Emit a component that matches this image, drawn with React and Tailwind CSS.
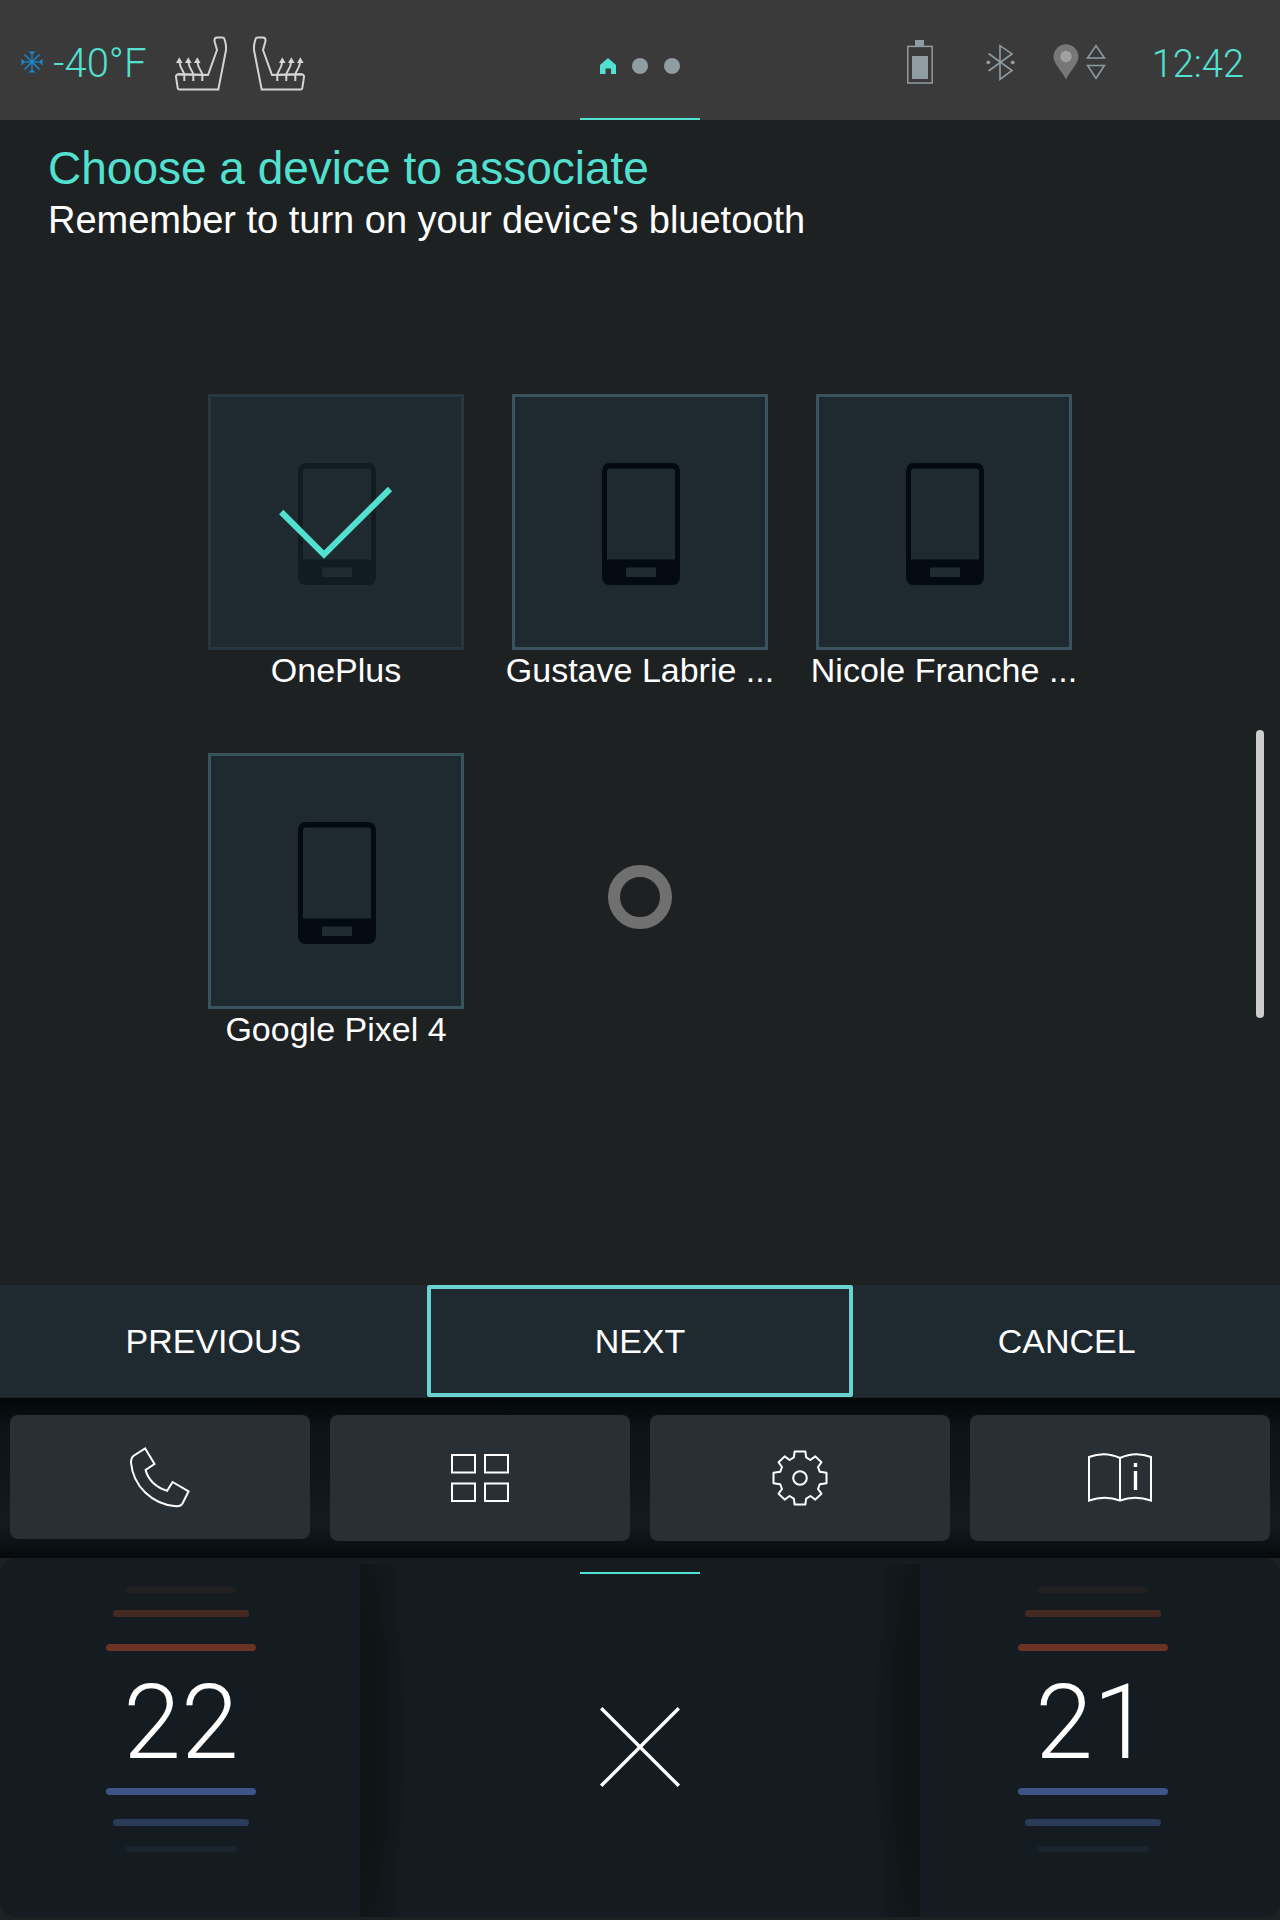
import React, { useState } from "react";

const SANS = "font-['Liberation_Sans',Arial,sans-serif]";
const DIGITS = "font-['Roboto',sans-serif]";

function Snowflake() {
  return (
    <svg width="22" height="22" viewBox="-11 -11 22 22" fill="none" stroke="#1296ea" strokeWidth="1.1" aria-hidden="true">
      {[0, 90, 180, 270].map((a) => (
        <path key={a} transform={`rotate(${a})`} d="M0 0V-10.8M-2.6 -10.6L0 -8L2.6 -10.6" />
      ))}
      {[45, 135, 225, 315].map((a) => (
        <path key={a} transform={`rotate(${a})`} d="M0 0V-10.6" />
      ))}
    </svg>
  );
}

function HeatedSeat({ mirrored }) {
  return (
    <svg width="52" height="56" viewBox="0 0 52 56" fill="none" stroke="#d4d4d4" strokeWidth="2" aria-hidden="true">
      <g transform={mirrored ? "translate(52 0) scale(-1 1)" : undefined}>
        <path d="M33 39L42 14L39.5 5Q39.3 1.8 42 1.6H47.5Q49.2 1.6 49.6 3.5Q51.4 9 51 14L43.3 53.6H4.5Q3 53.6 2.7 52L1 41Q.8 38.6 3 38.3Z" />
        <path d="M3 38.3L33 39" />
      </g>
      {[0, 9, 18].map((x) => (
        <g key={x} transform={`translate(${mirrored ? x + 15 : x} 0)`}>
          <path d={mirrored ? "M9.3 45V38.5C9.6 35 13.8 33 14.1 26" : "M9.3 45V38.5C9 35 4.8 33 4.5 26"} />
          <path d={mirrored ? "M14.3 21.3L17.6 27H11Z" : "M4.3 21.3L7.6 27H1Z"} fill="#d4d4d4" stroke="none" />
        </g>
      ))}
    </svg>
  );
}

function Home() {
  return (
    <svg width="16" height="16" viewBox="0 0 16 16" fill="#52e0d0" aria-hidden="true">
      <path d="M8 0L16 7V16H11V10.5H5.5V16H0V7Z" />
    </svg>
  );
}

function Battery() {
  return (
    <svg width="26" height="44" viewBox="0 0 26 44" fill="#8f9ca2" aria-hidden="true">
      <rect x="8" y="0" width="9" height="6" />
      <rect x="5" y="16" width="16" height="23" />
      <rect x=".8" y="6.4" width="24.4" height="36.6" fill="none" stroke="#8f9ca2" strokeWidth="1.5" />
    </svg>
  );
}

function Bluetooth() {
  return (
    <svg width="29" height="37" viewBox="0 0 29 37" fill="none" stroke="#8f9ca2" strokeWidth="1.6" aria-hidden="true">
      <path d="M2.5 9.5L26 26.5L14 35.3V1.7L26 9.9L2.5 27" />
      <circle cx="2.3" cy="18.3" r="1.9" fill="#8f9ca2" stroke="none" />
      <circle cx="26.7" cy="18.3" r="1.9" fill="#8f9ca2" stroke="none" />
    </svg>
  );
}

function LocationPin() {
  return (
    <svg width="26" height="36" viewBox="0 0 26 36" aria-hidden="true">
      <path d="M13 35.5C9 27 .5 20 .5 12.8A12.5 12.5 0 0 1 25.5 12.8C25.5 20 17 27 13 35.5Z" fill="#777" />
      <circle cx="13" cy="12.5" r="5.7" fill="#a0a0a0" />
    </svg>
  );
}

function DataArrows() {
  return (
    <svg width="20" height="36" viewBox="0 0 20 36" fill="none" stroke="#8f9ca2" strokeWidth="1.6" aria-hidden="true">
      <path d="M10 1.6L18.4 14H1.6ZM10 34.4L18.4 21.5H1.6Z" />
    </svg>
  );
}

function Smartphone() {
  return (
    <svg width="80" height="124" viewBox="0 0 80 124" aria-hidden="true">
      <path
        fillRule="evenodd"
        fill="#030a12"
        d="M9 1H71Q79 1 79 10V114Q79 123 71 123H9Q1 123 1 114V10Q1 1 9 1ZM9 6.5Q6 6.5 6 9.5V97.5H74V9.5Q74 6.5 71 6.5ZM25 105.5V115H55V105.5Z"
      />
    </svg>
  );
}

function Check() {
  return (
    <svg width="114" height="76" viewBox="0 0 114 76" fill="none" stroke="#52e0d0" strokeWidth="6" aria-hidden="true">
      <path d="M2.2 27L45 69.6L111 4" />
    </svg>
  );
}

function PhoneIcon() {
  return (
    <svg width="60" height="61" viewBox="0 0 60 61" fill="none" stroke="#fff" strokeWidth="2" aria-hidden="true">
      <path d="M15.2 1.5L24.5 17L15.6 23C18 33 26.5 40.5 37.1 43.7L42.6 35L58.6 44.3L52.5 56.5Q50.5 59.7 46 59.3C22 57.5 3 39 1 15.5Q1 10.5 4 8.5Z" />
    </svg>
  );
}

function AppsIcon() {
  return (
    <svg width="58" height="50" viewBox="0 0 58 50" fill="none" stroke="#fff" strokeWidth="2" aria-hidden="true">
      <path d="M1 2H24V19.5H1ZM34 2H57V19.5H34ZM1 30.5H24V48H1ZM34 30.5H57V48H34Z" />
    </svg>
  );
}

function GearIcon() {
  return (
    <svg width="56" height="56" viewBox="-28 -28 56 56" fill="none" stroke="#fff" strokeWidth="2" strokeLinejoin="round" aria-hidden="true">
      <path d="M-5.3 -26.5H5.3L6.2 -20.6L10.4 -18L15.3 -21.6L21.4 -15.7L18 -11L19.8 -6.2L26.5 -5.3V5.3L19.8 6.2L18 11L21.4 15.7L15.3 21.6L10.4 18L6.2 20.6L5.3 26.5H-5.3L-6.2 20.6L-10.4 18L-15.3 21.6L-21.4 15.7L-18 11L-19.8 6.2L-26.5 5.3V-5.3L-19.8 -6.2L-18 -11L-21.4 -15.7L-15.3 -21.6L-10.4 -18L-6.2 -20.6Z" />
      <circle r="6.8" />
    </svg>
  );
}

function ManualIcon() {
  return (
    <svg width="64" height="50" viewBox="0 0 64 50" fill="none" stroke="#fff" strokeWidth="2" aria-hidden="true">
      <path d="M1 4Q17 -2 32 5Q47 -2 63 4V47.5Q47 42 32 47.5Q17 42 1 47.5Z" />
      <path d="M32 5V47" />
      <path d="M47.5 10V14M47.5 18V37" strokeWidth="3.4" />
    </svg>
  );
}

function CloseIcon() {
  return (
    <svg width="80" height="80" viewBox="0 0 80 80" fill="none" stroke="#fff" strokeWidth="3.4" aria-hidden="true">
      <path d="M1.2 1.2L78.8 78.8M78.8 1.2L1.2 78.8" />
    </svg>
  );
}

const devices = ["OnePlus", "Gustave Labrie ...", "Nicole Franche ...", "Google Pixel 4"];

function Device({ name, paired, onSelect }) {
  return (
    <li>
      <button type="button" onClick={onSelect} aria-pressed={paired} className="flex w-64 flex-col items-center">
        <span className={`grid size-64 place-items-center border-3 bg-[#1e2a30] ${paired ? "border-[#26373f]" : "border-[#38525e]"}`}>
          <span className={`col-start-1 row-start-1 pt-1 pl-0.5 ${paired ? "opacity-45" : ""}`}>
            <Smartphone />
          </span>
          {paired && (
            <span className="z-10 col-start-1 row-start-1 pt-0.5">
              <Check />
            </span>
          )}
        </span>
        <span className="text-[34px] leading-10 whitespace-nowrap">{name}</span>
      </button>
    </li>
  );
}

function ClimateZone({ value, label, className }) {
  return (
    <section aria-label={label} className={`flex pt-[29px] ${className}`}>
      <div className="flex w-[150px] flex-col items-center">
        <span className="h-1.5 w-28 rounded-full bg-[#231f1e]" />
        <span className="mt-[17px] h-[7px] w-[136px] rounded-full bg-[#452820]" />
        <span className="mt-[27px] h-[7px] w-full rounded-full bg-[#6a3323]" />
        <output className={`${DIGITS} flex h-[137px] items-center pt-1.5 text-[104px] leading-none font-light`}>{value}</output>
        <span className="h-[7px] w-full rounded-full bg-[#3f5486]" />
        <span className="mt-6 h-[7px] w-[136px] rounded-full bg-[#2b3b5a]" />
        <span className="mt-5 h-1.5 w-28 rounded-full bg-[#1a242e]" />
      </div>
    </section>
  );
}

export default function App() {
  const [paired, setPaired] = useState("OnePlus");
  const dockButton = "flex items-center justify-center rounded-lg bg-[#293035]";

  return (
    <div className={`${SANS} flex min-h-screen flex-col bg-[#1e2122] text-white`}>
      <header className="grid h-[120px] grid-cols-[1fr_120px_1fr] bg-[#3a3a3a]">
        <div className="flex items-center pt-1 pl-[21px] text-[#52e0d0]">
          <Snowflake />
          <span className={`${DIGITS} ml-2.5 w-[101px] pt-1 text-[40px] leading-none font-light`}>-40°F</span>
          <span className="ml-[21px] flex gap-[26px] pt-1">
            <HeatedSeat />
            <HeatedSeat mirrored />
          </span>
        </div>
        <nav aria-label="Pages" className="flex items-center justify-center gap-4 border-b-2 border-[#52e0d0] pt-3.5">
          <button type="button" aria-label="Home" aria-current="page"><Home /></button>
          <button type="button" aria-label="Page 2" className="size-4 rounded-full bg-[#8f9ca2]" />
          <button type="button" aria-label="Page 3" className="size-4 rounded-full bg-[#8f9ca2]" />
        </nav>
        <div className="flex items-center justify-end pt-1 pr-9">
          <Battery />
          <span className="ml-[53px]"><Bluetooth /></span>
          <span className="ml-[38px]"><LocationPin /></span>
          <span className="ml-[7px]"><DataArrows /></span>
          <time className={`${DIGITS} ml-[46px] pt-1 text-[38px] leading-none font-light text-[#52e0d0]`}>12:42</time>
        </div>
      </header>

      <main className="relative h-[1165px] pt-5">
        <div className="px-12">
          <h1 className="text-[46px] leading-14 text-[#52e0d0]">Choose a device to associate</h1>
          <p className="text-[38px] leading-12">Remember to turn on your device's bluetooth</p>
        </div>
        <ul className="mt-[150px] grid grid-cols-[repeat(3,256px)] justify-center gap-x-12 gap-y-[63px]">
          {devices.map((name) => (
            <Device key={name} name={name} paired={name === paired} onSelect={() => setPaired(name)} />
          ))}
          <li role="status" aria-label="Searching" className="flex h-72 items-center justify-center">
            <span className="size-16 rounded-full border-12 border-[#707070]" />
          </li>
        </ul>
        <div className="absolute top-[610px] right-4 h-72 w-2 rounded-full bg-[#cdcdcd]" />
      </main>

      <div className="mb-px grid h-28 grid-cols-3 text-[34px] leading-10">
        <button type="button" className="bg-[#1e2a30]">PREVIOUS</button>
        <button type="button" className="rounded-xs border-4 border-[#69d3d0] bg-[#1e2a30]">NEXT</button>
        <button type="button" className="bg-[#1e2a30]">CANCEL</button>
      </div>

      <nav aria-label="Shortcuts" className="grid h-40 grid-cols-4 items-start gap-5 bg-[linear-gradient(to_bottom,#030708,#0c1215_18%,#131b1f_80%,#06090b)] px-2.5 pt-[17px]">
        <button type="button" aria-label="Phone" className={`${dockButton} h-[124px]`}><PhoneIcon /></button>
        <button type="button" aria-label="Apps" className={`${dockButton} h-[126px]`}><AppsIcon /></button>
        <button type="button" aria-label="Settings" className={`${dockButton} h-[126px]`}><GearIcon /></button>
        <button type="button" aria-label="Manual" className={`${dockButton} h-[126px]`}><ManualIcon /></button>
      </nav>

      <footer className="grid h-[359px] grid-cols-[360px_1fr_360px] rounded-2xl bg-[#141c22]">
        <ClimateZone value="22" label="Driver temperature" className="pl-[106px]" />
        <div className="mt-1.5 flex justify-between">
          <span className="w-12 bg-[radial-gradient(ellipse_100%_90%_at_left,#0f1415_40%,#141c22)]" />
          <div className="flex flex-col items-center">
            <span className="mt-2 h-0.5 w-[120px] bg-[#52e0d0]" />
            <button type="button" aria-label="Close" className="mt-[133px]"><CloseIcon /></button>
          </div>
          <span className="w-12 bg-[radial-gradient(ellipse_100%_90%_at_right,#0f1415_40%,#141c22)]" />
        </div>
        <ClimateZone value="21" label="Passenger temperature" className="justify-end pr-28" />
      </footer>
    </div>
  );
}
